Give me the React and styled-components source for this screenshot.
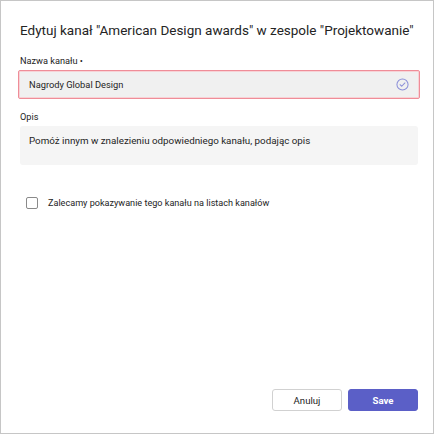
import React from "react";
import styled, { createGlobalStyle } from "styled-components";

const Global = createGlobalStyle`
  html, body { margin: 0; padding: 0; background: #fff; }
  body { font-family: Roboto, "Liberation Sans", Arial, sans-serif; color: #242424; }
  * { box-sizing: border-box; }
`;

const Dialog = styled.div`
  width: 434px;
  height: 434px;
  border: 1px solid #c6c6c6;
  background: #fff;
  display: flex;
  flex-direction: column;
  padding: 19px 15px 22px 19px;
`;

const Title = styled.h1`
  margin: 0;
  font-size: 13.5px;
  font-weight: 400;
  line-height: 20px;
  color: #242424;
  white-space: nowrap;
`;

const Field = styled.div`
  display: flex;
  flex-direction: column;
  margin-top: ${(p) => p.$top}px;
`;

const Label = styled.label`
  font-size: 9.2px;
  line-height: 12px;
  color: #242424;
  margin-bottom: 3px;
`;

const InputBox = styled.div`
  height: 29px;
  margin-left: -2px;
  margin-right: -2px;
  border: 1.5px solid #ef8d98;
  border-radius: 2px;
  background: #f0f0f0;
  box-shadow: inset 0 0 0 1px #f7d2d6;
  display: flex;
  align-items: center;
  padding: 0 10px 0 10px;
  font-size: 9.3px;
  color: #242424;
`;

const Grow = styled.span`
  flex: 1;
`;

const TextArea = styled.div`
  height: 39px;
  background: #f5f5f5;
  border-radius: 3px;
  padding: 8px 9px;
  font-size: 9.8px;
  line-height: 13px;
  color: #242424;
`;

const CheckRow = styled.label`
  display: flex;
  align-items: center;
  gap: 10px;
  margin-top: 32px;
  margin-left: 6px;
  font-size: 9.1px;
  color: #242424;
`;

const Box = styled.span`
  width: 12px;
  height: 12px;
  border: 1px solid #8a8a8a;
  border-radius: 2px;
  background: #fff;
`;

const Footer = styled.div`
  margin-top: auto;
  display: flex;
  justify-content: flex-end;
  gap: 6px;
`;

const Button = styled.button`
  width: ${(p) => p.$w}px;
  height: 22px;
  border-radius: 3px;
  font-family: Roboto, "Liberation Sans", Arial, sans-serif;
  font-size: 9.6px;
  font-weight: ${(p) => (p.$primary ? 700 : 400)};
  border: 1px solid ${(p) => (p.$primary ? "#5b5fc7" : "#d1d1d1")};
  background: ${(p) => (p.$primary ? "#5b5fc7" : "#fff")};
  color: ${(p) => (p.$primary ? "#fff" : "#242424")};
  padding: 0;
  cursor: pointer;
`;

const CheckIcon = () => (
  <svg width="13" height="13" viewBox="0 0 14 14">
    <circle cx="7" cy="7" r="6" fill="none" stroke="#8b8fd8" strokeWidth="1.1" />
    <path d="M4.4 7.2 L6.2 8.9 L9.6 5.3" fill="none" stroke="#8b8fd8" strokeWidth="1.1" strokeLinecap="round" strokeLinejoin="round" />
  </svg>
);

export default function App() {
  return (
    <>
      <Global />
      <Dialog>
        <Title>Edytuj kanał "American Design awards" w zespole "Projektowanie"</Title>
        <Field $top={15}>
          <Label>Nazwa kanału •</Label>
          <InputBox>
            <Grow>Nagrody Global Design</Grow>
            <CheckIcon />
          </InputBox>
        </Field>
        <Field $top={12}>
          <Label>Opis</Label>
          <TextArea>Pomóż innym w znalezieniu odpowiedniego kanału, podając opis</TextArea>
        </Field>
        <CheckRow>
          <Box />
          Zalecamy pokazywanie tego kanału na listach kanałów
        </CheckRow>
        <Footer>
          <Button $w={70}>Anuluj</Button>
          <Button $w={70} $primary>Save</Button>
        </Footer>
      </Dialog>
    </>
  );
}
